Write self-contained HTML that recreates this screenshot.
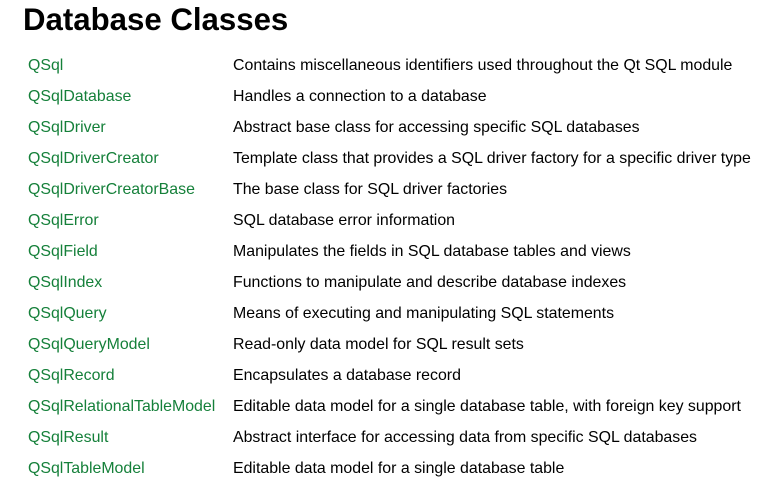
<!DOCTYPE html>
<html><head><style>
body{margin:0;background:#fff;width:778px;height:491px;overflow:hidden;font-family:"Liberation Sans",Arial,sans-serif;}
h1{position:absolute;left:23px;top:0;margin:0;font-size:31.2px;font-weight:bold;color:#000;line-height:40px;}
.r{position:absolute;left:0;height:31px;font-size:15.9px;line-height:20px;}
.a{position:absolute;left:28px;color:#15803a;white-space:nowrap}
.b{position:absolute;left:233px;color:#000;white-space:nowrap}
</style></head><body>
<h1>Database Classes</h1>
<div class="r" style="top:56px"><span class="a">QSql</span><span class="b">Contains miscellaneous identifiers used throughout the Qt SQL module</span></div>
<div class="r" style="top:87px"><span class="a">QSqlDatabase</span><span class="b">Handles a connection to a database</span></div>
<div class="r" style="top:118px"><span class="a">QSqlDriver</span><span class="b">Abstract base class for accessing specific SQL databases</span></div>
<div class="r" style="top:149px"><span class="a">QSqlDriverCreator</span><span class="b">Template class that provides a SQL driver factory for a specific driver type</span></div>
<div class="r" style="top:180px"><span class="a">QSqlDriverCreatorBase</span><span class="b">The base class for SQL driver factories</span></div>
<div class="r" style="top:211px"><span class="a">QSqlError</span><span class="b">SQL database error information</span></div>
<div class="r" style="top:242px"><span class="a">QSqlField</span><span class="b">Manipulates the fields in SQL database tables and views</span></div>
<div class="r" style="top:273px"><span class="a">QSqlIndex</span><span class="b">Functions to manipulate and describe database indexes</span></div>
<div class="r" style="top:304px"><span class="a">QSqlQuery</span><span class="b">Means of executing and manipulating SQL statements</span></div>
<div class="r" style="top:335px"><span class="a">QSqlQueryModel</span><span class="b">Read-only data model for SQL result sets</span></div>
<div class="r" style="top:366px"><span class="a">QSqlRecord</span><span class="b">Encapsulates a database record</span></div>
<div class="r" style="top:397px"><span class="a">QSqlRelationalTableModel</span><span class="b">Editable data model for a single database table, with foreign key support</span></div>
<div class="r" style="top:428px"><span class="a">QSqlResult</span><span class="b">Abstract interface for accessing data from specific SQL databases</span></div>
<div class="r" style="top:459px"><span class="a">QSqlTableModel</span><span class="b">Editable data model for a single database table</span></div>
</body></html>
